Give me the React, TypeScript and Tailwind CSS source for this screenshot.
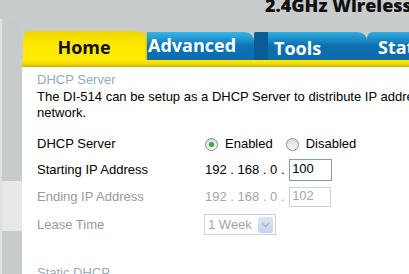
function Radio({ on }: { on?: boolean }) {
  return (
    <span className="w-[13px] h-[13px] rounded-full border border-[#8a9099] bg-gradient-to-b from-[#d8dce0] to-[#f8f9fa] flex items-center justify-center">
      {on && <span className="w-[5px] h-[5px] rounded-full bg-[#2ea84a]" />}
    </span>
  )
}

function Row({
  label,
  muted,
  children,
  className,
}: {
  label: string
  muted?: boolean
  children: React.ReactNode
  className?: string
}) {
  return (
    <div className={`flex items-center ${className ?? ''}`}>
      <div className={`w-[168px] ${muted ? 'text-[#9a9a9a]' : 'text-black'}`}>{label}</div>
      <div className="flex items-center">{children}</div>
    </div>
  )
}

function IpPrefix({ muted }: { muted?: boolean }) {
  return (
    <span className={`whitespace-pre ${muted ? 'text-[#a5a5a5]' : 'text-black'}`}>192 . 168 . 0 . </span>
  )
}

export default function App() {
  const tab = "font-['Open_Sans',sans-serif] font-bold text-[18px] leading-none"
  return (
    <div className="w-[409px] h-[274px] overflow-hidden bg-[#c9cccd] font-['Liberation_Sans',Arial,sans-serif] text-[13px]">
      {/* header */}
      <div className="h-[19px] overflow-hidden pl-[265px]">
        <div className="whitespace-nowrap font-['Open_Sans',sans-serif] font-extrabold text-[18px] leading-none text-[#111] mt-[-4px]">
          2.4GHz Wireless Router
        </div>
      </div>

      <div className="flex">
        {/* left strip */}
        <div className="flex w-[22px] shrink-0">
          <div className="w-[2px] bg-[#dfe1e2]" />
          <div className="flex-1 flex flex-col">
            <div className="h-[162px] bg-[#c8cbcc]" />
            <div className="h-[50px] bg-[#e6e8e9]" />
            <div className="flex-1 bg-[#c8cbcc]" />
          </div>
        </div>

        {/* main */}
        <div className="flex-1 min-w-0 overflow-hidden">
          {/* tabs */}
          <div className="h-[12px]" />
          <div className="flex items-end h-[29px] pl-[1px]">
            <div className={`${tab} shrink-0 w-[122px] h-[29px] rounded-t-[8px] bg-gradient-to-b from-[#efd700] via-[#ffea00] to-[#ffec00] text-[#111] flex items-center justify-center pt-[3px]`}>
              Home
            </div>
            <div className="shrink-0 w-[109px] h-[28px] rounded-tr-[9px] border-l-[2px] border-[#e8d400] bg-gradient-to-b from-[#38b6e8] via-[#0b74b8] to-[#0a6cad] flex items-center">
              <span className={`${tab} text-white pl-[1px] pb-[3px]`}>Advanced</span>
            </div>
            <div className="shrink-0 w-[113px] h-[28px] rounded-tr-[9px] bg-gradient-to-b from-[#30aee3] via-[#0c6fae] to-[#0d6aa8] flex items-center">
              <span className="w-[14px] h-full bg-[#0a5c98] rounded-tl-[3px]" />
              <span className={`${tab} text-white pl-[6px] pt-[4px]`}>Tools</span>
            </div>
            <div className="shrink-0 w-[80px] h-[28px] rounded-tl-[6px] bg-gradient-to-b from-[#30aee3] via-[#0c6fae] to-[#0d6aa8] flex items-center">
              <span className={`${tab} text-white pl-[11px] pt-[2px] whitespace-nowrap`}>Status</span>
            </div>
          </div>
          <div className="h-[7px] bg-gradient-to-b from-[#ffec00] via-[#f2dd00] to-[#c9b400]" />

          {/* content */}
          <div className="bg-white h-[250px] pl-[15px] pt-[5px]">
            <div className="text-[#93adbb] leading-[16px]">DHCP Server</div>
            <p className="mt-[1px] leading-[16px] whitespace-nowrap text-black">
              The DI-514 can be setup as a DHCP Server to distribute IP addresses to
              <br />
              network.
            </p>

            <Row label="DHCP Server" className="mt-[13px] h-[20px]">
              <Radio on />
              <span className="ml-[7px]">Enabled</span>
              <span className="ml-[13px]">
                <Radio />
              </span>
              <span className="ml-[7px]">Disabled</span>
            </Row>

            <Row label="Starting IP Address" className="mt-[5px] h-[22px]">
              <IpPrefix />
              <span className="ml-[1px] w-[43px] h-[22px] border border-[#7f9db9] px-[2px] leading-[18px]">100</span>
            </Row>

            <Row label="Ending IP Address" muted className="mt-[5px] h-[21px]">
              <IpPrefix muted />
              <span className="ml-[1px] w-[42px] h-[20px] border border-[#c9d3dc] px-[2px] leading-[16px] text-[#a5a5a5]">102</span>
            </Row>

            <Row label="Lease Time" muted className="mt-[7px] h-[21px]">
              <span className="ml-[-1px] w-[72px] h-[21px] border border-[#c9d3dc] flex items-center justify-between pl-[3px] pr-[2px] text-[#a5a5a5]">
                <span>1 Week</span>
                <span className="w-[15px] h-[16px] rounded-[2px] bg-gradient-to-b from-[#dce6f4] to-[#c3d3ec] flex items-center justify-center">
                  <svg width="9" height="6" viewBox="0 0 9 6" fill="none">
                    <path d="M1 1l3.5 3.5L8 1" stroke="#a8b6c8" strokeWidth="1.6" />
                  </svg>
                </span>
              </span>
            </Row>

            <div className="mt-[30px] text-[#93adbb] leading-[16px]">Static DHCP</div>
          </div>
        </div>
      </div>
    </div>
  )
}
